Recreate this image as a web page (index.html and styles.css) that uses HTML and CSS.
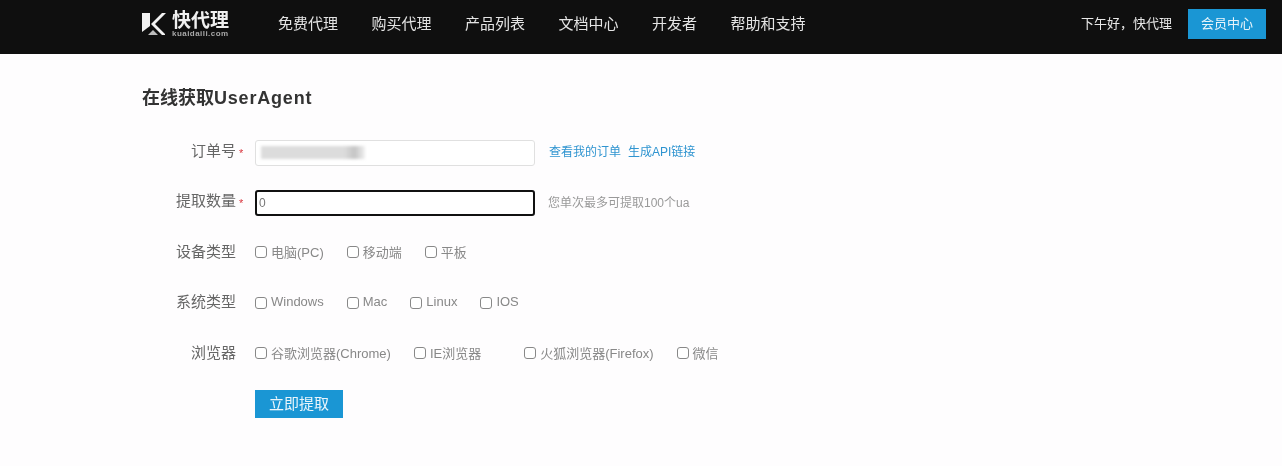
FILE: index.html
```html
<!DOCTYPE html>
<html lang="zh-CN">
<head>
  <meta charset="utf-8">
  <title>在线获取UserAgent</title>
  <link rel="stylesheet" href="styles.css">
</head>
<body>
  <div class="page">
    <header class="topbar">
      <a class="logo" href="#">
        <svg class="logoMark" width="24" height="24" viewBox="0 0 24 24">
          <path d="M0 1h8v13l-8 6z" fill="#f2f2f2"/>
          <path d="M9 12L20 1h4L13 12l10 10v1h-3z" fill="#f2f2f2"/>
          <path d="M6 23l5-5 5 5z" fill="#bdbdbd"/>
        </svg>
        <span class="logoText">
          <span class="logoName">快代理</span>
          <span class="logoSite">kuaidaili.com</span>
        </span>
      </a>
      <nav class="nav">
        <a href="#">免费代理</a>
        <a href="#">购买代理</a>
        <a href="#">产品列表</a>
        <a href="#">文档中心</a>
        <a href="#">开发者</a>
        <a href="#">帮助和支持</a>
      </nav>
      <div class="userArea">
        <span class="greeting">下午好，快代理</span>
        <a class="memberBtn" href="#">会员中心</a>
      </div>
    </header>

    <main class="content">
      <h1 class="title">在线获取<span class="titleLatin">UserAgent</span></h1>

      <form class="form">
        <div class="row">
          <label class="rowLabel">订单号</label>
          <span class="star">*</span>
          <div class="orderField"><span class="redacted"></span></div>
          <a class="rowLink" href="#">查看我的订单</a>
          <a class="rowLink" href="#">生成API链接</a>
        </div>

        <div class="row">
          <label class="rowLabel">提取数量</label>
          <span class="star">*</span>
          <input class="countField" type="text" value="0">
          <span class="hint">您单次最多可提取100个ua</span>
        </div>

        <div class="row">
          <label class="rowLabel">设备类型</label>
          <span class="star"></span>
          <div class="checks">
            <label class="check"><input type="checkbox">电脑(PC)</label>
            <label class="check"><input type="checkbox">移动端</label>
            <label class="check"><input type="checkbox">平板</label>
          </div>
        </div>

        <div class="row">
          <label class="rowLabel">系统类型</label>
          <span class="star"></span>
          <div class="checks">
            <label class="check"><input type="checkbox">Windows</label>
            <label class="check"><input type="checkbox">Mac</label>
            <label class="check"><input type="checkbox">Linux</label>
            <label class="check"><input type="checkbox">IOS</label>
          </div>
        </div>

        <div class="row">
          <label class="rowLabel">浏览器</label>
          <span class="star"></span>
          <div class="checks">
            <label class="check"><input type="checkbox">谷歌浏览器(Chrome)</label>
            <label class="check check-wide"><input type="checkbox">IE浏览器</label>
            <label class="check"><input type="checkbox">火狐浏览器(Firefox)</label>
            <label class="check"><input type="checkbox">微信</label>
          </div>
        </div>

        <div class="actions">
          <button class="submitBtn" type="button">立即提取</button>
        </div>
      </form>
    </main>
  </div>
</body>
</html>
```

FILE: styles.css
```css
html, body {
  margin: 0;
  height: 100%;
  background: #fefdfe;
}

.page {
  height: 466px;
  overflow: hidden;
  font-family: "Liberation Sans", "Noto Sans CJK SC", sans-serif;
  color: #666;
  filter: blur(0.5px);
}

a {
  text-decoration: none;
}

/* top bar */
.topbar {
  height: 54px;
  box-sizing: border-box;
  padding: 0 16px 6px 142px;
  display: flex;
  align-items: center;
  background: #0f0f0f;
}

.logo {
  width: 86px;
  flex: none;
  display: flex;
  align-items: center;
  gap: 6px;
}

.logoMark {
  flex: none;
}

.logoText {
  display: flex;
  flex-direction: column;
  white-space: nowrap;
}

.logoName {
  font-size: 19px;
  line-height: 18px;
  font-weight: bold;
  color: #f0f0f0;
}

.logoSite {
  font-size: 8px;
  line-height: 7px;
  font-weight: bold;
  letter-spacing: 0.45px;
  color: #a8a8a8;
}

.nav {
  margin-left: 50px;
  margin-top: -4px;
  display: flex;
  gap: 33.5px;
}

.nav a {
  font-size: 15px;
  color: #e4e4e4;
}

.userArea {
  margin-left: auto;
  display: flex;
  align-items: center;
  gap: 16px;
}

.greeting {
  margin-top: -4px;
  font-size: 13px;
  color: #e8e8e8;
}

.memberBtn {
  width: 78px;
  height: 30px;
  box-sizing: border-box;
  padding-bottom: 3px;
  display: flex;
  align-items: center;
  justify-content: center;
  font-size: 13px;
  color: #e8f4fa;
  background: #1a96d4;
}

/* form */
.content {
  padding: 33px 0 0 142px;
}

.title {
  margin: 0;
  font-size: 18px;
  line-height: 22px;
  font-weight: bold;
  color: #333;
}

.titleLatin {
  letter-spacing: 0.8px;
}

.form {
  margin-top: 30.5px;
  display: flex;
  flex-direction: column;
  gap: 24.4px;
}

.row {
  height: 26px;
  display: flex;
  align-items: center;
}

.rowLabel {
  width: 94px;
  flex: none;
  margin-top: -6px;
  text-align: right;
  font-size: 15px;
  color: #666;
}

.star {
  width: 19px;
  flex: none;
  padding-left: 3px;
  box-sizing: border-box;
  font-size: 11px;
  color: #d9363e;
}

.orderField {
  width: 280px;
  height: 26px;
  box-sizing: border-box;
  display: flex;
  align-items: center;
  padding-left: 5px;
  border: 1px solid #e0e0e0;
  border-radius: 3px;
  background: #fff;
}

.redacted {
  width: 104px;
  height: 13px;
  background: linear-gradient(90deg, #dcdcdc 0 80%, #c4c4c4 90%, #f0f0f0 100%);
  filter: blur(1.5px);
}

.countField {
  width: 280px;
  height: 26px;
  box-sizing: border-box;
  padding: 0 0 0 2px;
  border: 2px solid #111;
  border-radius: 3px;
  outline: none;
  background: #fff;
  font-family: inherit;
  font-size: 12px;
  color: #777;
}

.rowLink {
  margin-left: 14px;
  margin-top: -4px;
  font-size: 12px;
  color: #2f94d0;
}

.rowLink + .rowLink {
  margin-left: 7px;
}

.hint {
  margin-left: 13px;
  margin-top: -2px;
  font-size: 12px;
  color: #999;
}

.checks {
  margin-top: -4px;
  display: flex;
  gap: 23px;
}

.check {
  display: flex;
  align-items: center;
  gap: 4px;
  font-size: 13px;
  color: #888;
}

.check-wide {
  margin-right: 20px;
}

.check input {
  appearance: none;
  width: 12px;
  height: 12px;
  margin: 2px 0 0;
  flex: none;
  border: 1px solid #888;
  border-radius: 3px;
  background: #fff;
}

.actions {
  padding-left: 113px;
  margin-top: -1px;
}

.submitBtn {
  width: 88px;
  height: 28px;
  display: block;
  border: 0;
  padding: 0 0 4px;
  font-family: inherit;
  font-size: 15px;
  color: #eaf5fb;
  background: #1a96d4;
}
```
